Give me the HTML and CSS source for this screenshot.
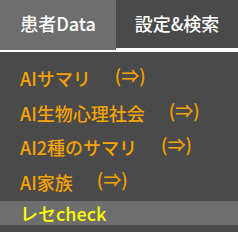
FILE: index.html
```html
<!DOCTYPE html>
<html lang="ja">
  <head>
    <meta charset="UTF-8" />
    <meta name="viewport" content="width=device-width, initial-scale=1.0" />
    <title>Menu</title>
    <link rel="stylesheet" href="styles.css">
  </head>
  <body>
    <div class="tabs">
      <div class="tab tab-patient active-tab">患者Data</div>
      <div class="tab tab-settings">設定&amp;検索</div>
    </div>
    <ul class="menu">
      <li class="menu-item">AIサマリ<span class="arrow">(⇒)</span></li>
      <li class="menu-item">AI生物心理社会<span class="arrow">(⇒)</span></li>
      <li class="menu-item">AI2種のサマリ<span class="arrow">(⇒)</span></li>
      <li class="menu-item">AI家族<span class="arrow">(⇒)</span></li>
      <li class="menu-item check-item selected">レセcheck</li>
      <li class="menu-item check-item next-item">レセ病名</li>
    </ul>
  </body>
</html>
```

FILE: styles.css
```css
body {
  margin: 0;
  background: #4a4a4a;
  font-family: "Noto Sans CJK JP", "Noto Sans", sans-serif;
  font-weight: 500;
  overflow: hidden;
}

.tabs {
  display: flex;
  align-items: flex-start;
  height: 52px;
  background: #fff;
}

.tab {
  height: 48px;
  line-height: 46px;
  text-align: center;
  color: #fff;
  font-size: 18px;
  background: #4a4a4a;
}

.tab-patient {
  width: 116px;
}

.tab-settings {
  flex-grow: 1;
}

.active-tab {
  height: 50px;
  background: #6e6e6e;
}

.menu {
  list-style: none;
  margin: 0;
  padding: 11px 0 0;
}

.menu-item {
  height: 24px;
  line-height: 24px;
  padding-left: 20px;
  margin-bottom: 10.5px;
  font-size: 18px;
  color: #f5a300;
  white-space: nowrap;
}

.arrow {
  margin-left: 24px;
  vertical-align: 3px;
}

.check-item {
  color: #ffff00;
  margin-bottom: 0;
}

.selected {
  background: #6e6e6e;
}

.next-item {
  margin-top: 3px;
}
```
